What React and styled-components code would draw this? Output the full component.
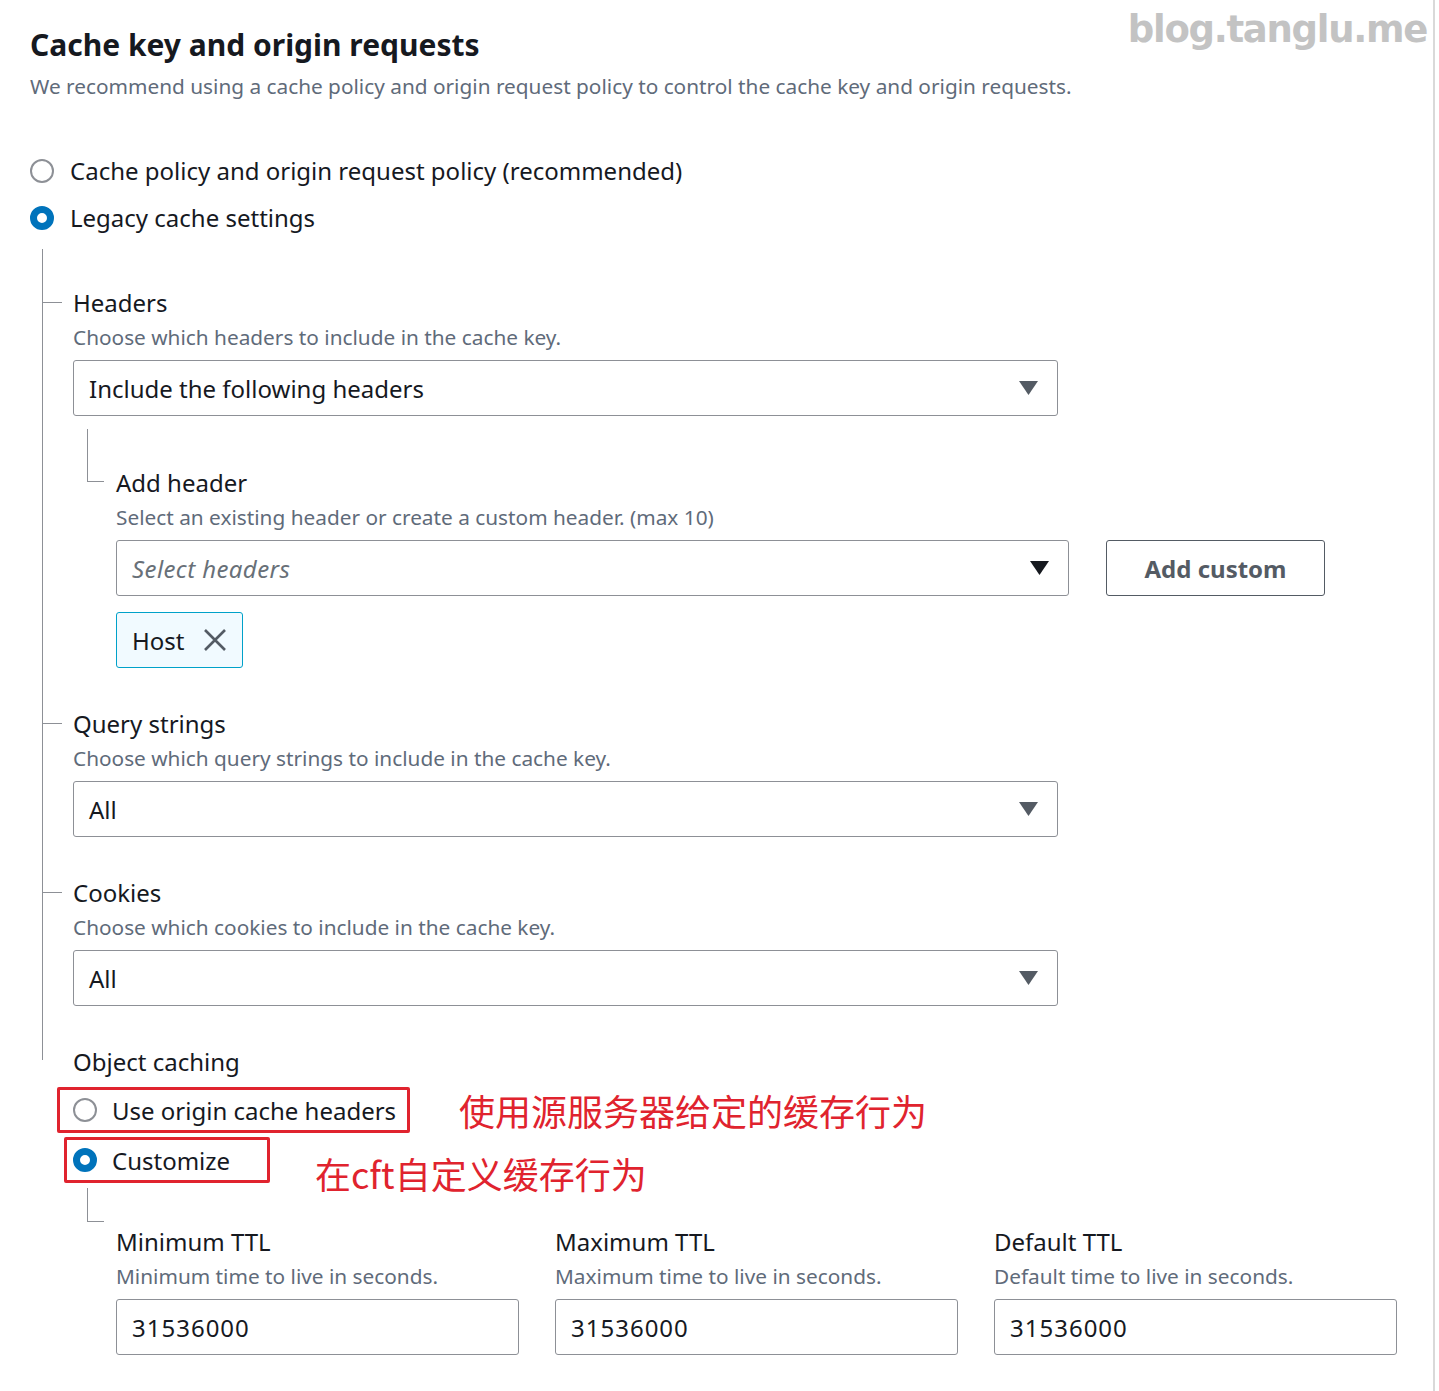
import styled, { createGlobalStyle } from "styled-components";

const GlobalStyle = createGlobalStyle`
  html, body {
    margin: 0;
    padding: 0;
    background: #ffffff;
  }
  body {
    font-family: "Noto Sans", "Open Sans", "Noto Sans CJK SC", sans-serif;
    color: #16191f;
  }
`;

const Page = styled.div`
  position: relative;
  box-sizing: border-box;
  width: 1435px;
  min-height: 1391px;
  padding: 25px 0 30px 30px;
  border-right: 2px solid #d9d9d9;
  background: #ffffff;
`;

const Watermark = styled.div`
  position: absolute;
  top: 8px;
  right: 6px;
  font-family: "DejaVu Sans", sans-serif;
  font-weight: 700;
  font-size: 37px;
  letter-spacing: -1.3px;
  color: #c3c3c3;
`;

const Title = styled.h2`
  margin: 0;
  font-size: 30px;
  line-height: 40px;
  font-weight: 700;
`;

const Subtitle = styled.p`
  margin: 5px 0 0;
  font-size: 20.8px;
  line-height: 32px;
  color: #5f6b7a;
`;

const RadioGroup = styled.div`
  display: flex;
  flex-direction: column;
  margin-top: ${(p) => p.$top || 0}px;
`;

const RadioRow = styled.label`
  display: flex;
  align-items: center;
  gap: ${(p) => p.$gap || 16}px;
  height: ${(p) => p.$h || 47}px;
  font-size: 24px;
  color: #16191f;
`;

const Circle = styled.span`
  box-sizing: border-box;
  width: 24px;
  height: 24px;
  flex-shrink: 0;
  border-radius: 50%;
  background: #ffffff;
  border: ${(p) => (p.$on ? "7px solid #0073bb" : "2px solid #8d9096")};
`;

const Branch = styled.div`
  display: flex;
  margin: 8px 0 0 12px;
`;

const Rail = styled.div`
  width: 1px;
  flex-shrink: 0;
  background: #8d9096;
  margin-bottom: ${(p) => p.$cut || 0}px;
`;

const BranchBody = styled.div`
  display: flex;
  flex-direction: column;
  margin-left: 30px;
  padding-top: 37px;
`;

const Section = styled.div`
  display: flex;
  flex-direction: column;
  margin-top: ${(p) => p.$top || 0}px;
`;

const Label = styled.div`
  position: relative;
  font-size: 24px;
  line-height: 34px;
  color: #16191f;

  ${(p) =>
    p.$tick &&
    `
    &::before {
      content: "";
      position: absolute;
      left: -30px;
      top: 16px;
      width: 19px;
      border-top: 1px solid #8d9096;
    }
  `}
`;

const Desc = styled.div`
  margin-top: 2px;
  font-size: 20.8px;
  line-height: 30px;
  color: #5f6b7a;
`;

const Select = styled.div`
  box-sizing: border-box;
  display: flex;
  align-items: center;
  justify-content: space-between;
  width: ${(p) => p.$w || 985}px;
  height: 56px;
  margin-top: 8px;
  padding: 0 19px 0 15px;
  border: 1px solid #8d9096;
  border-radius: 3px;
  font-size: 24px;
  letter-spacing: ${(p) => (p.$placeholder ? "0.4px" : "0")};
  color: ${(p) => (p.$placeholder ? "#687078" : "#16191f")};
  font-style: ${(p) => (p.$placeholder ? "italic" : "normal")};
  background: #ffffff;
`;

const Caret = ({ color = "#545b64" }) => (
  <svg width="19" height="14" viewBox="0 0 19 14">
    <path d="M0 0 H19 L9.5 14 Z" fill={color} />
  </svg>
);

const SubBranch = styled.div`
  display: flex;
  padding-left: ${(p) => p.$indent || 14}px;
`;

const Elbow = styled.div`
  width: 17px;
  height: ${(p) => p.$h}px;
  margin-top: ${(p) => p.$top}px;
  flex-shrink: 0;
  box-sizing: border-box;
  border-left: 1px solid #8d9096;
  border-bottom: 1px solid #8d9096;
`;

const SubBody = styled.div`
  display: flex;
  flex-direction: column;
  margin-left: 12px;
  padding-top: ${(p) => p.$top}px;
`;

const Row = styled.div`
  display: flex;
  align-items: flex-end;
  gap: 37px;
`;

const Button = styled.button`
  box-sizing: border-box;
  width: 219px;
  height: 56px;
  border: 1px solid #545b64;
  border-radius: 3px;
  background: #ffffff;
  font-family: inherit;
  font-size: 24px;
  font-weight: 700;
  color: #545b64;
`;

const Tag = styled.div`
  box-sizing: border-box;
  display: inline-flex;
  align-items: center;
  gap: 19px;
  align-self: flex-start;
  height: 56px;
  margin-top: 16px;
  padding: 0 15px;
  border: 1px solid #00a1c9;
  border-radius: 3px;
  background: #f1faff;
  font-size: 24px;
`;

const CloseIcon = () => (
  <svg width="24" height="24" viewBox="0 0 24 24">
    <path d="M2 2 L22 22 M22 2 L2 22" stroke="#545b64" strokeWidth="2.6" fill="none" />
  </svg>
);

const Caching = styled.div`
  display: flex;
  flex-direction: column;
  margin-left: 43px;
`;

const NoteRow = styled.div`
  display: flex;
  align-items: ${(p) => p.$align || "center"};
  gap: ${(p) => p.$gap}px;
  margin-top: ${(p) => p.$top || 0}px;
`;

const RedBox = styled.div`
  box-sizing: border-box;
  display: flex;
  align-items: center;
  width: ${(p) => p.$w}px;
  height: 46px;
  margin-left: ${(p) => p.$shift || 0}px;
  padding-left: ${(p) => p.$pad}px;
  border: 3px solid #e0232e;
  border-radius: 2px;
`;

const Note = styled.span`
  font-family: "Noto Sans CJK SC", "Noto Sans", sans-serif;
  font-size: 36px;
  line-height: 44px;
  color: #e0232e;
  margin-bottom: ${(p) => p.$drop || 0}px;
`;

const TtlGrid = styled.div`
  display: grid;
  grid-template-columns: repeat(3, 403px);
  column-gap: 36px;
`;

const Input = styled.div`
  box-sizing: border-box;
  display: flex;
  align-items: center;
  height: 56px;
  margin-top: 8px;
  padding: 0 15px;
  border: 1px solid #8d9096;
  border-radius: 3px;
  font-size: 24px;
  letter-spacing: 1px;
`;

const ttl = [
  { name: "Minimum TTL", desc: "Minimum time to live in seconds." },
  { name: "Maximum TTL", desc: "Maximum time to live in seconds." },
  { name: "Default TTL", desc: "Default time to live in seconds." },
];

const App = () => {
  return (
    <>
      <GlobalStyle />
      <Page>
        <Watermark>blog.tanglu.me</Watermark>
        <Title>Cache key and origin requests</Title>
        <Subtitle>
          We recommend using a cache policy and origin request policy to control the cache key and origin requests.
        </Subtitle>

        <RadioGroup $top={45}>
          <RadioRow>
            <Circle />
            Cache policy and origin request policy (recommended)
          </RadioRow>
          <RadioRow>
            <Circle $on />
            Legacy cache settings
          </RadioRow>
        </RadioGroup>

        <Branch>
          <Rail $cut={19} />
          <BranchBody>
            <Section>
              <Label $tick>Headers</Label>
              <Desc>Choose which headers to include in the cache key.</Desc>
              <Select>
                Include the following headers
                <Caret />
              </Select>
              <SubBranch>
                <Elbow $top={13} $h={53} />
                <SubBody $top={50}>
                  <Label>Add header</Label>
                  <Desc>Select an existing header or create a custom header. (max 10)</Desc>
                  <Row>
                    <Select $w={953} $placeholder>
                      Select headers
                      <Caret color="#16191f" />
                    </Select>
                    <Button>Add custom</Button>
                  </Row>
                  <Tag>
                    Host
                    <CloseIcon />
                  </Tag>
                </SubBody>
              </SubBranch>
            </Section>

            <Section $top={39}>
              <Label $tick>Query strings</Label>
              <Desc>Choose which query strings to include in the cache key.</Desc>
              <Select>
                All
                <Caret />
              </Select>
            </Section>

            <Section $top={39}>
              <Label $tick>Cookies</Label>
              <Desc>Choose which cookies to include in the cache key.</Desc>
              <Select>
                All
                <Caret />
              </Select>
            </Section>

            <Section $top={39}>
              <Label>Object caching</Label>
            </Section>
          </BranchBody>
        </Branch>

        <Caching>
          <NoteRow $gap={49} $top={8}>
            <RedBox $w={353} $pad={13} $shift={-16}>
              <RadioRow $gap={15}>
                <Circle />
                Use origin cache headers
              </RadioRow>
            </RedBox>
            <Note>使用源服务器给定的缓存行为</Note>
          </NoteRow>
          <NoteRow $gap={45} $top={4} $align="flex-end">
            <RedBox $w={206} $pad={6} $shift={-9}>
              <RadioRow $gap={15}>
                <Circle $on />
                Customize
              </RadioRow>
            </RedBox>
            <Note $drop={-12}>在cft自定义缓存行为</Note>
          </NoteRow>

          <SubBranch $indent={14}>
            <Elbow $top={5} $h={34} />
            <SubBody $top={42}>
              <TtlGrid>
                {ttl.map((t) => (
                  <Section key={t.name}>
                    <Label>{t.name}</Label>
                    <Desc>{t.desc}</Desc>
                    <Input>31536000</Input>
                  </Section>
                ))}
              </TtlGrid>
            </SubBody>
          </SubBranch>
        </Caching>
      </Page>
    </>
  );
};

export default App;
